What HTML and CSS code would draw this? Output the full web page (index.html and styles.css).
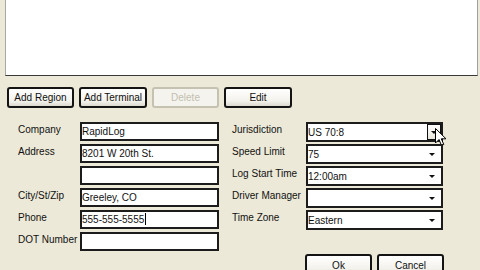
FILE: index.html
```html
<!DOCTYPE html>
<html>
<head>
<meta charset="utf-8">
<link rel="stylesheet" href="styles.css">
</head>
<body>
<div class="app">
  <div class="list"></div>
  <div class="toolbar">
    <div class="btn w67">Add Region</div>
    <div class="btn w68">Add Terminal</div>
    <div class="btn w67 disabled">Delete</div>
    <div class="btn w68">Edit</div>
  </div>
  <div class="form">
    <div class="col left">
      <div class="row"><span class="lbl">Company</span><div class="field">RapidLog</div></div>
      <div class="row"><span class="lbl">Address</span><div class="field">8201 W 20th St.</div></div>
      <div class="row"><span class="lbl"></span><div class="field"></div></div>
      <div class="row"><span class="lbl">City/St/Zip</span><div class="field">Greeley, CO</div></div>
      <div class="row"><span class="lbl">Phone</span><div class="field">555-555-5555<span class="caret"></span></div></div>
      <div class="row"><span class="lbl">DOT Number</span><div class="field"></div></div>
    </div>
    <div class="col right">
      <div class="row"><span class="lbl rl">Jurisdiction</span><div class="field combo">US 70:8<span class="dropbtn"><span class="tri"></span></span>
        <svg class="cursor" width="12" height="20" viewBox="0 0 12 20"><path d="M0.5 0.5 L0.5 15 L4 11.5 L6.5 17.5 L8.8 16.5 L6.3 10.8 L11 10.8 Z" fill="#fff" stroke="#000" stroke-width="1"/></svg>
      </div></div>
      <div class="row"><span class="lbl rl">Speed Limit</span><div class="field combo">75<span class="tri abs"></span></div></div>
      <div class="row"><span class="lbl rl">Log Start Time</span><div class="field combo">12:00am<span class="tri abs"></span></div></div>
      <div class="row"><span class="lbl rl">Driver Manager</span><div class="field combo"><span class="tri abs"></span></div></div>
      <div class="row"><span class="lbl rl">Time Zone</span><div class="field combo">Eastern<span class="tri abs"></span></div></div>
    </div>
  </div>
  <div class="footer">
    <div class="btn w67">Ok</div>
    <div class="btn w67">Cancel</div>
  </div>
</div>
</body>
</html>
```
FILE: styles.css
```css
html, body {
  margin: 0;
  padding: 0;
  background: #ECE9D8;
  width: 480px;
  height: 270px;
  overflow: hidden;
  font-family: "Liberation Sans", Arial, sans-serif;
  font-size: 10px;
  color: #111;
}
.app {
  width: 480px;
  height: 270px;
  display: flex;
  flex-direction: column;
}
.list {
  margin-left: 5px;
  width: 471px;
  height: 75px;
  background: #fff;
  border-left: 1px solid #a8a8a0;
  border-right: 1px solid #a0a0a0;
  border-bottom: 1px solid #3a3a3a;
  flex-shrink: 0;
}
.toolbar {
  display: flex;
  gap: 5px;
  margin-top: 11px;
  padding-left: 7px;
}
.btn {
  box-sizing: border-box;
  height: 21px;
  border: 2px solid #141414;
  border-radius: 3px;
  background: linear-gradient(#ffffff, #f3f2ec 70%, #dcdad0);
  display: flex;
  align-items: center;
  justify-content: center;
  font-size: 10px;
  color: #111;
  flex-shrink: 0;
  white-space: nowrap;
}
.w67 { width: 67px; }
.w68 { width: 68px; }
.btn.disabled {
  border-color: #c5c2b2;
  color: #c2bfb0;
  background: #f4f3ee;
}
.form {
  display: flex;
  margin-top: 14px;
  padding-left: 18px;
  gap: 13px;
}
.col {
  display: flex;
  flex-direction: column;
  gap: 3px;
}
.row {
  display: flex;
  height: 19px;
}
.lbl {
  width: 62px;
  flex-shrink: 0;
  padding-top: 2px;
  font-size: 10px;
  line-height: 12px;
  white-space: nowrap;
}
.lbl.rl { width: 74px; }
.field {
  position: relative;
  box-sizing: border-box;
  width: 139px;
  height: 19px;
  border: 2px solid #1c1c1c;
  background: #fff;
  font-size: 10px;
  line-height: 15px;
  padding-left: 0px;
  white-space: nowrap;
}
.field.combo {
  width: 137px;
  height: 20px;
  padding-top: 1px;
}
.caret {
  display: inline-block;
  width: 1px;
  height: 12px;
  background: #000;
  vertical-align: -2px;
  margin-left: 1px;
}
.tri {
  display: inline-block;
  width: 0;
  height: 0;
  border-left: 3px solid transparent;
  border-right: 3px solid transparent;
  border-top: 3px solid #111;
}
.tri.abs {
  position: absolute;
  right: 6px;
  top: 7px;
}
.dropbtn {
  position: absolute;
  right: 0px;
  top: 0px;
  width: 14px;
  height: 16px;
  box-sizing: border-box;
  border: 1px solid #111;
  background: linear-gradient(#ffffff, #e8e6dc);
  display: flex;
  align-items: center;
  justify-content: center;
}
.cursor {
  position: absolute;
  right: -6px;
  top: 4px;
}
.footer {
  display: flex;
  justify-content: flex-end;
  gap: 5px;
  padding-right: 36px;
  margin-top: 3px;
}
.footer .btn {
  height: 22px;
}
```
